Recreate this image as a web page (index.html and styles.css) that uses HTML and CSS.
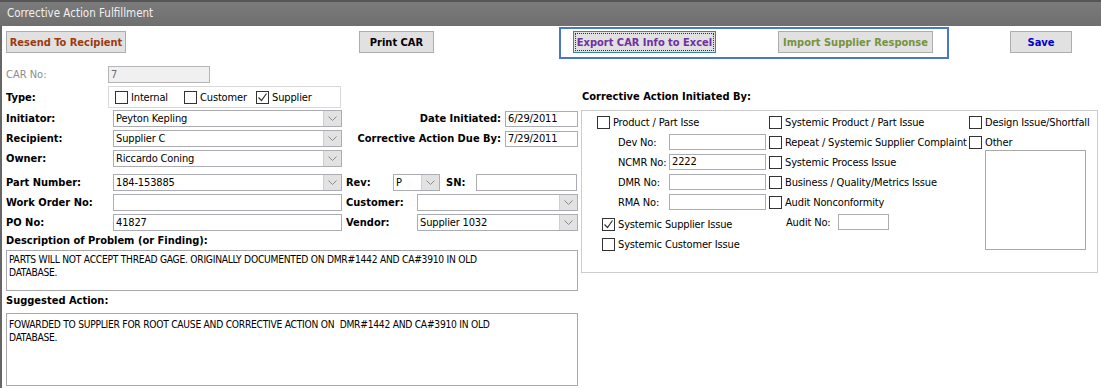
FILE: index.html
```html
<!DOCTYPE html>
<html lang="en">
<head>
  <meta charset="UTF-8" />
  <title>Corrective Action Fulfillment</title>
  <link rel="stylesheet" href="styles.css">
</head>
<body>
  <div class="titlebar">Corrective Action Fulfillment</div>
  <div class="main">
    <div class="toolbar">
      <button class="btn btn-resend">Resend To Recipient</button>
      <button class="btn btn-print">Print CAR</button>
      <div class="excel-group">
        <button class="btn btn-export">Export CAR Info to Excel</button>
        <button class="btn btn-import">Import Supplier Response</button>
      </div>
      <button class="btn btn-save">Save</button>
    </div>

    <div class="content">
      <div class="left">
        <div class="row row-car">
          <span class="lbl lbl-short lbl-dim">CAR No:</span>
          <div class="field field-car">7</div>
        </div>
        <div class="row row-type">
          <span class="lbl lbl-short">Type:</span>
          <div class="typebox">
            <span class="opt opt-internal"><span class="chk"></span>Internal</span>
            <span class="opt opt-customer"><span class="chk"></span>Customer</span>
            <span class="opt"><span class="chk checked"><svg width="11" height="11" viewBox="0 0 11 11"><polyline points="1.5,5.5 4.5,8.5 9.5,1.5" fill="none" stroke="#333" stroke-width="1.2"/></svg></span>Supplier</span>
          </div>
        </div>
        <div class="row row-first">
          <span class="lbl">Initiator:</span>
          <div class="combo combo-main"><span class="val">Peyton Kepling</span><span class="arrow"><svg width="9" height="5" viewBox="0 0 9 5"><polyline points="0.5,0.5 4.5,4.5 8.5,0.5" fill="none" stroke="#8a8a8a"/></svg></span></div>
          <span class="rlbl">Date Initiated:</span>
          <div class="field field-date">6/29/2011</div>
        </div>
        <div class="row">
          <span class="lbl">Recipient:</span>
          <div class="combo combo-main"><span class="val">Supplier C</span><span class="arrow"><svg width="9" height="5" viewBox="0 0 9 5"><polyline points="0.5,0.5 4.5,4.5 8.5,0.5" fill="none" stroke="#8a8a8a"/></svg></span></div>
          <span class="rlbl">Corrective Action Due By:</span>
          <div class="field field-date">7/29/2011</div>
        </div>
        <div class="row">
          <span class="lbl">Owner:</span>
          <div class="combo combo-main"><span class="val">Riccardo Coning</span><span class="arrow"><svg width="9" height="5" viewBox="0 0 9 5"><polyline points="0.5,0.5 4.5,4.5 8.5,0.5" fill="none" stroke="#8a8a8a"/></svg></span></div>
        </div>
        <div class="row row-group">
          <span class="lbl">Part Number:</span>
          <div class="combo combo-main"><span class="val">184-153885</span><span class="arrow"><svg width="9" height="5" viewBox="0 0 9 5"><polyline points="0.5,0.5 4.5,4.5 8.5,0.5" fill="none" stroke="#8a8a8a"/></svg></span></div>
          <span class="lbl lbl-rev">Rev:</span>
          <div class="combo combo-rev"><span class="val">P</span><span class="arrow"><svg width="9" height="5" viewBox="0 0 9 5"><polyline points="0.5,0.5 4.5,4.5 8.5,0.5" fill="none" stroke="#8a8a8a"/></svg></span></div>
          <span class="lbl lbl-sn">SN:</span>
          <div class="field field-sn"></div>
        </div>
        <div class="row">
          <span class="lbl">Work Order No:</span>
          <div class="field field-main"></div>
          <span class="lbl lbl-mid">Customer:</span>
          <div class="combo combo-side"><span class="val"></span><span class="arrow"><svg width="9" height="5" viewBox="0 0 9 5"><polyline points="0.5,0.5 4.5,4.5 8.5,0.5" fill="none" stroke="#8a8a8a"/></svg></span></div>
        </div>
        <div class="row">
          <span class="lbl">PO No:</span>
          <div class="field field-main">41827</div>
          <span class="lbl lbl-mid">Vendor:</span>
          <div class="combo combo-side"><span class="val">Supplier 1032</span><span class="arrow"><svg width="9" height="5" viewBox="0 0 9 5"><polyline points="0.5,0.5 4.5,4.5 8.5,0.5" fill="none" stroke="#8a8a8a"/></svg></span></div>
        </div>
        <div class="section-lbl">Description of Problem (or Finding):</div>
        <div class="memo memo-desc">PARTS WILL NOT ACCEPT THREAD GAGE. ORIGINALLY DOCUMENTED ON DMR#1442 AND CA#3910 IN OLD<br>DATABASE.</div>
        <div class="section-lbl section-lbl-2">Suggested Action:</div>
        <div class="memo memo-action">FOWARDED TO SUPPLIER FOR ROOT CAUSE AND CORRECTIVE ACTION ON &nbsp;DMR#1442 AND CA#3910 IN OLD<br>DATABASE.</div>
      </div>

      <div class="right">
        <div class="heading">Corrective Action Initiated By:</div>
        <div class="initbox">
          <div class="col col-1">
            <div class="cb-row"><span class="chk"></span>Product / Part Isse</div>
            <div class="sub-row"><span class="sub-lbl">Dev No:</span><div class="field field-sub"></div></div>
            <div class="sub-row"><span class="sub-lbl">NCMR No:</span><div class="field field-sub">2222</div></div>
            <div class="sub-row"><span class="sub-lbl">DMR No:</span><div class="field field-sub"></div></div>
            <div class="sub-row"><span class="sub-lbl">RMA No:</span><div class="field field-sub"></div></div>
            <div class="cb-row cb-indent cb-gap"><span class="chk checked"><svg width="11" height="11" viewBox="0 0 11 11"><polyline points="1.5,5.5 4.5,8.5 9.5,1.5" fill="none" stroke="#333" stroke-width="1.2"/></svg></span>Systemic Supplier Issue</div>
            <div class="cb-row cb-indent"><span class="chk"></span>Systemic Customer Issue</div>
          </div>
          <div class="col col-2">
            <div class="cb-row"><span class="chk"></span>Systemic Product / Part Issue</div>
            <div class="cb-row"><span class="chk"></span>Repeat / Systemic Supplier Complaint</div>
            <div class="cb-row"><span class="chk"></span>Systemic Process Issue</div>
            <div class="cb-row"><span class="chk"></span>Business / Quality/Metrics Issue</div>
            <div class="cb-row"><span class="chk"></span>Audit Nonconformity</div>
            <div class="sub-row audit-row"><span class="sub-lbl audit-lbl">Audit No:</span><div class="field field-audit"></div></div>
          </div>
          <div class="col col-3">
            <div class="cb-row"><span class="chk"></span>Design Issue/Shortfall</div>
            <div class="cb-row"><span class="chk"></span>Other</div>
            <div class="memo memo-other"></div>
          </div>
        </div>
      </div>
    </div>
  </div>
</body>
</html>
```

FILE: styles.css
```css
body {
  margin: 0;
  width: 1101px;
  height: 388px;
  overflow: hidden;
  background: #fff;
  color: #000;
  font-family: "DejaVu Sans Condensed", "DejaVu Sans", sans-serif;
  font-stretch: condensed;
  font-size: 11px;
  letter-spacing: -0.15px;
}
.titlebar {
  height: 26px;
  box-sizing: border-box;
  border-top: 2px solid #555;
  background: linear-gradient(#7b7b7b, #6f6f6f);
  color: #f0f0f0;
  font-size: 11.5px;
  letter-spacing: 0;
  line-height: 23px;
  padding-left: 7px;
}
.main {
  border-left: 2px solid #666;
  height: 362px;
}

/* toolbar buttons */
.toolbar {
  display: flex;
  align-items: flex-start;
  height: 33px;
}
.btn {
  height: 22px;
  margin-top: 5px;
  box-sizing: border-box;
  padding: 0;
  background: #e1e1e1;
  border: 1px solid #adadad;
  font-family: inherit;
  font-stretch: condensed;
  font-size: 11px;
  font-weight: bold;
  letter-spacing: 0;
}
.btn-resend {
  margin-left: 4px;
  width: 120px;
  color: #9c3a12;
}
.btn-print {
  margin-left: 233px;
  width: 75px;
}
.excel-group {
  display: flex;
  justify-content: space-between;
  margin-left: 125px;
  margin-top: 1px;
  width: 390px;
  height: 32px;
  box-sizing: border-box;
  border: 2px solid #4a77c8;
  padding: 0 14px 0 12px;
}
.excel-group .btn {
  margin-top: 2px;
}
.btn-export {
  width: 143px;
  color: #7030a0;
  border-color: #3c7fb1;
  outline: 1px dotted #333;
  outline-offset: -3px;
}
.btn-import {
  width: 155px;
  color: #77933c;
}
.btn-save {
  margin-left: 61px;
  width: 62px;
  color: #0000cc;
}

/* main form */
.content {
  display: flex;
}
.left {
  margin-left: 4px;
  width: 572px;
}
.row {
  display: flex;
  align-items: center;
  height: 17px;
  margin-top: 3px;
}
.row-car {
  margin-top: 7px;
}
.row-type {
  height: 22px;
}
.row-first {
  margin-top: 2px;
}
.row-group {
  margin-top: 7px;
}
.lbl {
  flex: none;
  width: 107px;
  font-weight: bold;
  letter-spacing: 0;
}
.lbl-short {
  width: 102px;
}
.lbl-dim {
  font-weight: normal;
  color: #8c8c8c;
}
.lbl-rev {
  width: 47px;
  margin-left: 4px;
}
.lbl-sn {
  width: 30px;
  margin-left: 6px;
}
.lbl-mid {
  width: 71px;
  margin-left: 4px;
}
.rlbl {
  flex: 1;
  text-align: right;
  font-weight: bold;
  letter-spacing: 0;
  padding-right: 4px;
}
.field {
  flex: none;
  height: 17px;
  box-sizing: border-box;
  border: 1px solid #abadb3;
  background: #fff;
  padding: 0 2px;
  line-height: 15px;
  white-space: nowrap;
}
.field-car {
  width: 102px;
  background: #f0f0f0;
  color: #6d6d6d;
  border-color: #b5b5b5;
}
.field-date {
  width: 73px;
  height: 16px;
  line-height: 14px;
}
.field-main {
  width: 229px;
}
.field-sn {
  width: 101px;
}
.combo {
  flex: none;
  display: flex;
  height: 17px;
  box-sizing: border-box;
  border: 1px solid #abadb3;
  background: #fff;
}
.combo .val {
  flex: 1;
  padding-left: 2px;
  line-height: 15px;
  white-space: nowrap;
}
.combo .arrow {
  width: 17px;
  display: flex;
  align-items: center;
  justify-content: center;
  background: #e2e2e2;
  border-left: 1px solid #cfcfcf;
}
.combo-main {
  width: 229px;
}
.combo-rev {
  width: 47px;
}
.combo-side {
  width: 161px;
}

/* type checkboxes */
.typebox {
  display: flex;
  align-items: center;
  width: 233px;
  height: 22px;
  box-sizing: border-box;
  border: 1px solid #d9d9d9;
  padding-left: 6px;
}
.opt {
  display: flex;
  align-items: center;
}
.opt-internal {
  width: 69px;
}
.opt-customer {
  width: 72px;
}
.chk {
  flex: none;
  display: flex;
  align-items: center;
  justify-content: center;
  width: 13px;
  height: 13px;
  box-sizing: border-box;
  border: 1px solid #333;
  background: #fff;
  margin-right: 3px;
}

/* description / action */
.section-lbl {
  height: 19px;
  line-height: 19px;
  font-weight: bold;
  letter-spacing: 0;
}
.section-lbl-2 {
  height: 22px;
  line-height: 20px;
}
.memo {
  box-sizing: border-box;
  border: 1px solid #a9a9a9;
  background: #fff;
  padding: 2px 2px;
  font-size: 10.2px;
  letter-spacing: -0.25px;
  line-height: 13px;
}
.memo-desc {
  height: 41px;
}
.memo-action {
  height: 73px;
  padding-top: 4px;
}

/* corrective action initiated by */
.right {
  margin-left: 3px;
  width: 517px;
  padding-top: 31px;
}
.heading {
  height: 14px;
  line-height: 14px;
  font-weight: bold;
  letter-spacing: 0;
  padding-left: 1px;
  margin-bottom: 6px;
}
.initbox {
  display: grid;
  grid-template-columns: 172px 200px 1fr;
  height: 163px;
  box-sizing: border-box;
  border: 1px solid #cdcdcd;
  padding: 1px 0 0 15px;
}
.cb-row {
  display: flex;
  align-items: center;
  height: 20px;
  white-space: nowrap;
}
.cb-indent {
  padding-left: 5px;
}
.cb-gap {
  margin-top: 2px;
}
.sub-row {
  display: flex;
  align-items: center;
  height: 20px;
  padding-left: 21px;
}
.sub-lbl {
  width: 51px;
  flex: none;
}
.field-sub {
  width: 97px;
  height: 16px;
  line-height: 14px;
}
.audit-row {
  padding-left: 17px;
}
.audit-lbl {
  width: 52px;
}
.field-audit {
  width: 51px;
  height: 16px;
}
.memo-other {
  margin: -2px 0 0 16px;
  width: 101px;
  height: 100px;
}
```
